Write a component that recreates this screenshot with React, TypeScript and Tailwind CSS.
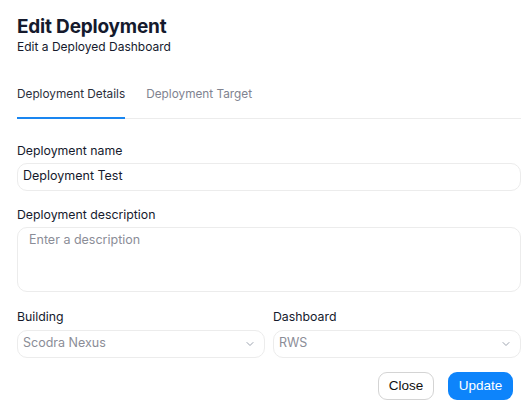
import React from "react";

const font = { fontFamily: "Inter, 'Noto Sans', sans-serif" };

function Chevron() {
  return (
    <svg width="12" height="12" viewBox="0 0 24 24" fill="none" stroke="#9ca3af" strokeWidth="2" strokeLinecap="round" strokeLinejoin="round">
      <path d="M6 9l6 6 6-6" />
    </svg>
  );
}

function Select({ value }: { value: string }) {
  return (
    <div className="flex h-[28px] items-center justify-between rounded-[10px] border border-[#ececec] pl-[5px] pr-[8px]">
      <span className="text-[12.5px] text-[#8b8d97]">{value}</span>
      <Chevron />
    </div>
  );
}

export default function App() {
  return (
    <div className="h-[418px] w-[532px] bg-white pl-[17px] pr-[11px] pt-[15px]" style={font}>
      <h1 className="text-[19px] font-bold leading-[24px] tracking-[-0.2px] text-[#151a2d]">Edit Deployment</h1>
      <p className="text-[12px] leading-[15px] text-[#151a2d]">Edit a Deployed Dashboard</p>

      <div className="mt-[32px] flex border-b border-[#ececec]">
        <div className="-mb-px border-b-2 border-[#1a86f0] pb-[13px] text-[11.8px] text-[#2b2f3b]">Deployment Details</div>
        <div className="ml-[21px] pb-[13px] text-[11.8px] text-[#808390]">Deployment Target</div>
      </div>

      <div className="mt-[24px] text-[12.3px] leading-[16px] text-[#151a2d]">Deployment name</div>
      <div className="mt-[4px] flex h-[28px] items-center rounded-[10px] border border-[#ececec] pl-[5px]">
        <span className="text-[12.5px] text-[#151a2d]">Deployment Test</span>
      </div>

      <div className="mt-[16px] text-[12.3px] leading-[16px] text-[#151a2d]">Deployment description</div>
      <div className="mt-[4px] h-[65px] rounded-[10px] border border-[#ececec] pl-[11px] pt-0 leading-[20px]">
        <span className="text-[12.5px] text-[#8b8d97]">Enter a description</span>
      </div>

      <div className="mt-[17px] grid grid-cols-2 gap-[8px]">
        <div>
          <div className="text-[12.3px] leading-[16px] text-[#151a2d]">Building</div>
          <div className="mt-[5px]"><Select value="Scodra Nexus" /></div>
        </div>
        <div>
          <div className="text-[12.3px] leading-[16px] text-[#151a2d]">Dashboard</div>
          <div className="mt-[5px]"><Select value="RWS" /></div>
        </div>
      </div>

      <div className="mt-[14px] flex justify-end gap-[14px] pr-[8px]" style={{ fontFamily: "'Liberation Sans', Arial, sans-serif" }}>
        <button className="h-[28px] w-[56px] rounded-[9px] border border-[#d4d4d4] bg-white text-[13.5px] text-[#111]">Close</button>
        <button className="h-[28px] w-[65px] rounded-[9px] bg-[#0d84fb] text-[13.5px] text-white">Update</button>
      </div>
    </div>
  );
}
